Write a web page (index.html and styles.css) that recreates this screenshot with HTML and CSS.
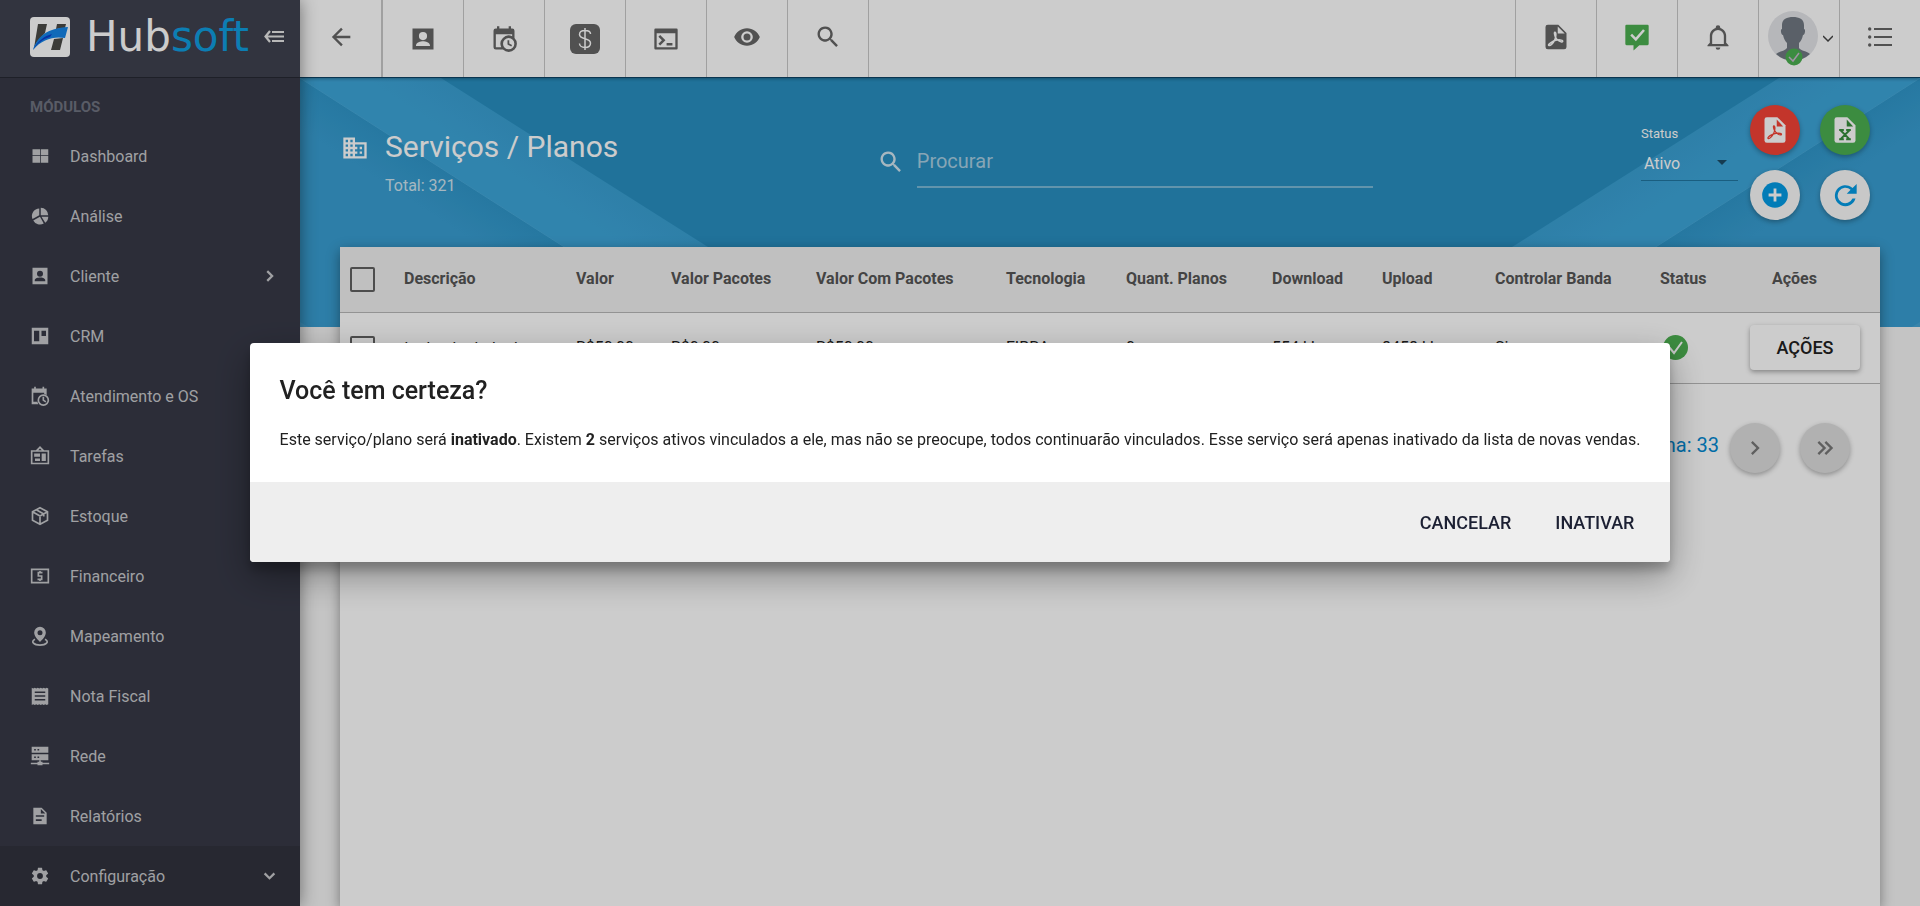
FILE: index.html
```html
<!DOCTYPE html>
<html lang="pt-BR">
<head>
<meta charset="utf-8">
<title>Hubsoft - Serviços / Planos</title>
<link rel="stylesheet" href="styles.css">
</head>
<body>
<div class="app">
  <aside class="sidebar">
    <div class="brand">
      <svg class="brand-mark" viewBox="0 0 40 40" aria-hidden="true">
        <rect width="40" height="40" rx="4" fill="#fff"/>
        <path d="M8 7h9l-2 9-8 9-3 6zM27 7h9l-1 4-9 1zM24 22l9-1-3 12h-9z" fill="#4a4a46"/>
        <path d="M3 33C7 20 17 11 38 10L35 21C24 19 12 22 3 33z" fill="#1585e8"/>
        <path d="M3 33C8 24 14 19 22 17L20 20C12 22 7 27 3 33z" fill="#0a3fd0"/>
      </svg>
      <span class="brand-name">Hub<span class="brand-accent">soft</span></span>
      <button class="icon-btn fold" type="button" aria-label="Recolher menu">
        <svg class="i20" viewBox="0 0 20 14"><path d="M6 1 1.500 6.500 6 12M2 6.500H20M8 2H20M8 11H20" fill="none" stroke="currentColor" stroke-width="2.200"/></svg>
      </button>
    </div>
    <h2 class="menu-title">MÓDULOS</h2>
    <nav class="menu">
      <a class="item" href="#"><svg class="i18" viewBox="0 0 24 24"><path d="M2 3h10v8H2zM13 3h10v8H13zM2 12h10v9H2zM13 12h10v9H13z"/></svg><span>Dashboard</span></a>
      <a class="item" href="#"><svg class="i18" viewBox="0 0 24 24"><path d="M13 1v10h10A10 10 0 0 0 13 1zM11 2A10 10 0 0 0 2 16l9-5zM12 13 3 18a10 10 0 0 0 14 4zM14 13l5 8a10 10 0 0 0 4-8z"/></svg><span>Análise</span></a>
      <a class="item" href="#"><svg class="i18" viewBox="0 0 24 24"><path fill-rule="evenodd" d="M2 1h20v22H2zM12 5a4 4 0 1 1 0 8 4 4 0 0 1 0-8zM5 19v-1.500C5 15 9.500 14 12 14s7 1 7 3.500V19z"/></svg><span>Cliente</span><svg class="i18 chev" viewBox="0 0 24 24"><path d="M7 5.500l6.500 6.500L7 18.500" class="line"/></svg></a>
      <a class="item" href="#"><svg class="i18" viewBox="0 0 24 24"><path fill-rule="evenodd" d="M1 1h22v22H1zM4 5v14h7V5zM14 5v7h6V5z"/></svg><span>CRM</span></a>
      <a class="item" href="#"><svg class="i20" viewBox="0 0 24 24"><path fill-rule="evenodd" d="M5 1h2v2h8V1h2v2h3v8a7 7 0 0 0-3-1V8H4v11h5a7 7 0 0 0 1 3H2V3h3z"/><circle cx="16" cy="17" r="6" fill="none" stroke="currentColor" stroke-width="2"/><path d="M16 13v4l3 2" class="line"/></svg><span>Atendimento e OS</span></a>
      <a class="item" href="#"><svg class="i20" viewBox="0 0 24 24"><path fill-rule="evenodd" d="M12 0l5 5h6v17H1V5h6zM12 3l-2 2h4zM3 7v13h18V7zM5 9h7v4H5zM14 9h5v9h-5zM6 15h6v3H6z"/></svg><span>Tarefas</span></a>
      <a class="item" href="#"><svg class="i20" viewBox="0 0 24 24"><path d="M12 2l9 5v10l-9 5-9-5V7zM3 7l9 5 9-5M12 12v10M7.500 4.500l9 5v3" class="line"/></svg><span>Estoque</span></a>
      <a class="item" href="#"><svg class="i20" viewBox="0 0 24 24"><path d="M2 4h20v16H2zM15 8h-5v4h4v4H9M12 6v2M12 16v2" class="line"/></svg><span>Financeiro</span></a>
      <a class="item" href="#"><svg class="i20" viewBox="0 0 24 24"><path fill-rule="evenodd" d="M12 1a7 7 0 0 1 7 7c0 5-7 11-7 11S5 13 5 8a7 7 0 0 1 7-7zM12 5a3 3 0 1 0 0 6 3 3 0 0 0 0-6z"/><path d="M6 16c-6 3-1 7 6 7s12-4 6-7" class="line"/></svg><span>Mapeamento</span></a>
      <a class="item" href="#"><svg class="i18" viewBox="0 0 24 24"><path fill-rule="evenodd" d="M1 1l2 1 2-1 2 1 2-1 2 1 2-1 2 1 2-1 2 1 2-1 2 1v21l-2 1-2-1-2 1-2-1-2 1-2-1-2 1-2-1-2 1-2-1-2 1zM5 6v2h14V6zM5 11v2h14v-2zM5 16v2h14v-2z"/></svg><span>Nota Fiscal</span></a>
      <a class="item" href="#"><svg class="i20" viewBox="0 0 24 24"><path fill-rule="evenodd" d="M2 1h20v7H2zM5 3.500v2h2v-2zM9 3.500v2h2v-2zM2 10h20v7H2zM5 12.500v2h2v-2zM9 12.500v2h2v-2z"/><path d="M11 17h2v2h2v1h8v2h-8v1H9v-1H1v-2h8v-1h2z"/></svg><span>Rede</span></a>
      <a class="item" href="#"><svg class="i20" viewBox="0 0 24 24"><path fill-rule="evenodd" d="M4 2h10l6 6v14H4zM13 3.500V9h5.500zM7 11v2h10v-2zM7 16v2h7v-2z"/></svg><span>Relatórios</span></a>
      <a class="item active" href="#"><svg class="i20" viewBox="0 0 24 24"><path d="M12 15.500A3.500 3.500 0 1 1 12 8.500a3.500 3.500 0 0 1 0 7m7.430-2.530c.04-.32.07-.64.07-.97s-.03-.66-.07-1l2.110-1.630c.19-.15.24-.42.12-.64l-2-3.460c-.12-.22-.39-.31-.61-.22l-2.490 1c-.52-.39-1.060-.73-1.690-.98l-.37-2.650A.506.506 0 0 0 14 2h-4c-.25 0-.46.18-.5.420l-.37 2.650c-.63.25-1.170.59-1.690.98l-2.490-1c-.22-.09-.49 0-.61.22l-2 3.460c-.13.22-.07.49.12.64L4.570 11c-.04.34-.07.67-.07 1s.03.65.07.97l-2.110 1.660c-.19.15-.25.42-.12.64l2 3.460c.12.22.39.3.61.22l2.490-1.010c.52.4 1.060.74 1.690.99l.37 2.650c.04.24.25.42.5.42h4c.25 0 .46-.18.5-.42l.37-2.650c.63-.26 1.170-.59 1.690-.99l2.490 1.010c.22.08.49 0 .61-.22l2-3.460c.12-.22.07-.49-.12-.64z"/></svg><span>Configuração</span><svg class="i18 chev" viewBox="0 0 24 24"><path d="M3.500 8.500L10 15l6.500-6.500" class="line"/></svg></a>
    </nav>
  </aside>

  <div class="page">
    <header class="toolbar">
      <button class="tool back" type="button" aria-label="Voltar"><svg class="i28" viewBox="0 0 24 24"><path d="M20 11v2H8l5.500 5.500-1.420 1.420L4.160 12l7.920-7.920L13.500 5.500 8 11z"/></svg></button>
      <button class="tool low" type="button" aria-label="Cliente"><svg class="i28" viewBox="0 0 24 24"><path fill-rule="evenodd" d="M3 3h18v18H3zM12 6a3.500 3.500 0 1 0 0 7 3.500 3.500 0 0 0 0-7zM6 17.500V18h12v-.5c0-2.300-4-3.500-6-3.500s-6 1.200-6 3.500z"/></svg></button>
      <button class="tool low" type="button" aria-label="Agenda"><svg class="i28" viewBox="0 0 24 24"><path d="M15 13h1.500v2.820l2.440 1.410-.75 1.300L15 16.690zM19 8H5v11h4.670A7 7 0 0 1 19 9.670zM5 21a2 2 0 0 1-2-2V5a2 2 0 0 1 2-2h1V1h2v2h8V1h2v2h1a2 2 0 0 1 2 2v6.100A7 7 0 1 1 11.100 21zM16 11.150a4.850 4.850 0 1 0 0 9.700 4.850 4.850 0 0 0 0-9.700z"/></svg></button>
      <button class="tool low" type="button" aria-label="Financeiro"><svg class="i32" viewBox="0 0 32 32"><rect x="1" y="1" width="30" height="30" rx="6"/><path d="M16 5v22M21.500 11c0-2-2-3.500-5.500-3.500s-5.500 1.500-5.500 4c0 5.500 11 3 11 8.500 0 3-2 4.500-5.500 4.500s-5.500-2-5.500-4" fill="none" stroke="#fff" stroke-width="1.500"/></svg></button>
      <button class="tool low" type="button" aria-label="Terminal"><svg class="i28" viewBox="0 0 24 24"><path fill-rule="evenodd" d="M3 3h18a1 1 0 0 1 1 1v16a1 1 0 0 1-1 1H3a1 1 0 0 1-1-1V4a1 1 0 0 1 1-1zM4 7v12h16V7zM5.500 10 7 8.500l4.500 4.500L7 17.500 5.500 16l3-3zM12.500 15.500h5v2h-5z"/></svg></button>
      <button class="tool" type="button" aria-label="Visualizar"><svg class="i28" viewBox="0 0 24 24"><path fill-rule="evenodd" d="M12 4.500C7 4.500 2.700 7.600 1 12c1.700 4.400 6 7.500 11 7.500s9.300-3.100 11-7.500C21.300 7.600 17 4.500 12 4.500zM12 17a5 5 0 1 1 0-10 5 5 0 0 1 0 10zM12 9a3 3 0 1 0 0 6 3 3 0 0 0 0-6z"/></svg></button>
      <button class="tool" type="button" aria-label="Pesquisar"><svg class="i28" viewBox="0 0 24 24"><path d="M9.500 3a6.500 6.500 0 0 1 4.940 10.730l.27.27h.79l5 5-1.500 1.500-5-5v-.79l-.27-.27A6.500 6.500 0 1 1 9.500 3m0 2a4.500 4.500 0 1 0 0 9 4.500 4.500 0 0 0 0-9"/></svg></button>
      <span class="spacer"></span>
      <button class="tool right" type="button" aria-label="PDF"><svg class="i28" viewBox="0 0 24 24"><path d="M5 1.500h9l7 7v12a2 2 0 0 1-2 2H5a2 2 0 0 1-2-2v-17a2 2 0 0 1 2-2z"/><path d="M13.500 3v6h6z" fill="#fff"/><path d="M11 8c1.400 0 1 4 0 6.500-1.200 2.500-4 5.500-5.200 4.700s3.800-4.200 7-4.600c3-.4 5.200.2 4.900 1.200-.5 1.400-4.900-.8-6.100-3.500-.8-2-1.300-4.300-.6-4.300z" fill="none" stroke="#fff" stroke-width="1.300"/></svg></button>
      <button class="tool right green" type="button" aria-label="Mensagens"><svg class="i28" viewBox="0 0 24 24"><path d="M3 1.500h18a1 1 0 0 1 1 1V18a1 1 0 0 1-1 1h-7l-5 4.500V19H3a1 1 0 0 1-1-1V2.500a1 1 0 0 1 1-1z"/><path d="M7 10l4 4 7-8" fill="none" stroke="#fff" stroke-width="2.200"/></svg></button>
      <button class="tool right" type="button" aria-label="Notificações"><svg class="i28" viewBox="0 0 24 24"><path d="M10 21h4a2 2 0 0 1-4 0m11-2v1H3v-1l2-2v-6c0-3.100 2.030-5.830 5-6.710V4a2 2 0 0 1 4 0v.29c2.970.88 5 3.610 5 6.710v6zm-4-8a5 5 0 0 0-10 0v7h10z"/></svg></button>
      <button class="tool right user" type="button" aria-label="Usuário">
        <svg class="avatar" viewBox="0 0 50 55"><circle cx="25" cy="25" r="25" fill="#e4e5e9"/><path d="M14 14C14 8 19 6 25 6s11 2 11 8v4c2 0 1 6-1 6-1 4-2 6-4 8v5c2 3 8 3 11 6a25 25 0 0 1-34 0c4-3 9-3 11-6v-5c-2-2-3-4-4-8-2 0-3-6-1-6z" fill="#717982"/><circle cx="26" cy="46" r="8.500" fill="#4caf50"/><path d="M21 46l4 4 6-8" fill="none" stroke="#c9b9cf" stroke-width="1.500"/></svg>
        <svg class="i10" viewBox="0 0 10 10"><path d="M0 2l5 5 5-5" fill="none" stroke="currentColor" stroke-width="1.500"/></svg>
      </button>
      <button class="tool right list" type="button" aria-label="Lista"><svg class="i24" viewBox="0 0 24 24"><path d="M6 3h18v2H6zM6 11h18v2H6zM6 19h18v2H6z"/><circle cx="1.700" cy="4" r="1.700"/><circle cx="1.700" cy="12" r="1.700"/><circle cx="1.700" cy="20" r="1.700"/></svg></button>
    </header>

    <main class="content">
      <svg class="ribbon" viewBox="0 0 540 250" aria-hidden="true">
        <defs>
          <linearGradient id="corner" gradientUnits="userSpaceOnUse" x1="141" y1="90" x2="117" y2="127"><stop offset="0" stop-color="#3097ca"/><stop offset="1" stop-color="#399ed2"/></linearGradient>
          <linearGradient id="band" gradientUnits="userSpaceOnUse" x1="270" y1="81" x2="246" y2="118"><stop offset="0" stop-color="#3aa0d3"/><stop offset="1" stop-color="#3da5d9"/></linearGradient>
        </defs>
        <path d="M0 0 391 250H0z" fill="url(#corner)"/>
        <path d="M0 0H141L536 250H391z" fill="url(#band)"/>
        <path d="M0 0 391 250" stroke="#46a9da" fill="none"/>
        <path d="M0 244 10 250H0z" fill="#46a5d6"/>
      </svg>
      <svg class="ribbon mirrored" viewBox="0 0 540 250" aria-hidden="true">
        <path d="M0 0 391 250H0z" fill="url(#corner)"/>
        <path d="M0 0H141L536 250H391z" fill="url(#band)"/>
        <path d="M0 0 391 250" stroke="#46a9da" fill="none"/>
        <path d="M0 244 10 250H0z" fill="#46a5d6"/>
      </svg>
      <section class="heading">
        <div class="title-block">
          <svg class="i28" viewBox="0 0 24 24"><path d="M18 15h-2v2h2m0-6h-2v2h2m2 6h-8v-2h2v-2h-2v-2h2v-2h-2V9h8M10 7H8V5h2m0 6H8V9h2m0 6H8v-2h2m0 6H8v-2h2M6 7H4V5h2m0 6H4V9h2m0 6H4v-2h2m0 6H4v-2h2m6-10V3H2v18h20V7z"/></svg>
          <div>
            <h1 class="title">Serviços / Planos</h1>
            <p class="total">Total: 321</p>
          </div>
        </div>
        <label class="search">
          <svg class="i28" viewBox="0 0 24 24"><path d="M9.500 3a6.500 6.500 0 0 1 4.940 10.730l.27.27h.79l5 5-1.500 1.500-5-5v-.79l-.27-.27A6.500 6.500 0 1 1 9.500 3m0 2a4.500 4.500 0 1 0 0 9 4.500 4.500 0 0 0 0-9"/></svg>
          <input class="search-input" type="text" placeholder="Procurar" aria-label="Procurar">
        </label>
        <div class="filters">
          <div class="status">
            <label class="status-label" for="status">Status</label>
            <div class="select-wrap">
              <select class="select" id="status"><option>Ativo</option><option>Inativo</option></select>
            </div>
          </div>
          <div class="actions">
            <button class="fab red" type="button" aria-label="Exportar PDF"><svg class="i28" viewBox="0 0 24 24"><path d="M5 1h9l7 7v13a2 2 0 0 1-2 2H5a2 2 0 0 1-2-2V3a2 2 0 0 1 2-2z"/><path d="M13.500 3v6H19z" fill="#f44336"/><path d="M11 8.500c1.400 0 1 4 0 6-1.200 2.500-3.700 5.500-4.900 4.700s3.500-4 6.700-4.400c3-.4 5 .2 4.700 1-.5 1.400-4.700-.8-5.900-3.300-.8-2-1.300-4-.6-4z" fill="none" stroke="#f44336" stroke-width="1.100"/></svg></button>
            <button class="fab green-bg" type="button" aria-label="Exportar Excel"><svg class="i28" viewBox="0 0 24 24"><path d="M5 1h9l7 7v13a2 2 0 0 1-2 2H5a2 2 0 0 1-2-2V3a2 2 0 0 1 2-2z"/><path d="M13.500 3v6H19z" fill="#388e3c"/><path d="M8 12l8 8M16 12l-8 8M7 12h4M13 12h4M7 20h4M13 20h4" fill="none" stroke="#388e3c" stroke-width="1.700"/></svg></button>
            <button class="fab" type="button" aria-label="Adicionar"><svg class="i28" viewBox="0 0 24 24"><circle cx="12" cy="12" r="11"/><path d="M12 6.500v11M6.500 12h11" stroke="#fff" stroke-width="2.400"/></svg></button>
            <button class="fab" type="button" aria-label="Atualizar"><svg class="i28" viewBox="0 0 24 24"><path d="M18.500 6A9 9 0 1 0 21 15h-2.600A6.600 6.600 0 1 1 16.800 7.600L13.500 11H22V2.500z"/></svg></button>
          </div>
        </div>
      </section>

      <section class="card">
        <table class="grid">
          <colgroup><col class="c1"><col class="c2"><col class="c3"><col class="c4"><col class="c5"><col class="c6"><col class="c7"><col class="c8"><col class="c9"><col class="c10"><col class="c11"><col class="c12"></colgroup>
          <thead>
            <tr><th><input class="check" type="checkbox" aria-label="Selecionar todos"></th><th>Descrição</th><th>Valor</th><th>Valor Pacotes</th><th>Valor Com Pacotes</th><th>Tecnologia</th><th>Quant. Planos</th><th>Download</th><th>Upload</th><th>Controlar Banda</th><th>Status</th><th class="th-actions">Ações</th></tr>
          </thead>
          <tbody>
            <tr><td><input class="check" type="checkbox" aria-label="Selecionar plano"></td><td>testes teste teste</td><td>R$50,00</td><td>R$0,00</td><td>R$50,00</td><td>FIBRA</td><td>0</td><td>554 kbps</td><td>8458 kbps</td><td>Sim</td><td><svg class="ok" viewBox="0 0 25 25" role="img" aria-label="Ativo"><circle cx="12.500" cy="12.500" r="12.500" fill="#4caf50"/><path d="M6 12l5 6 8-11" fill="none" stroke="#fff" stroke-width="2"/></svg></td><td><button class="row-btn" type="button">AÇÕES</button></td></tr>
          </tbody>
        </table>
        <div class="pager">
          <span class="pager-text">Última Página: 33</span>
          <button class="fab grey" type="button" aria-label="Próxima página"><svg class="i28" viewBox="0 0 24 24"><path d="M8.600 16.600 13.200 12 8.600 7.400 10 6l6 6-6 6z"/></svg></button>
          <button class="fab grey" type="button" aria-label="Última página"><svg class="i28" viewBox="0 0 24 24"><path d="M5.600 7.400 7 6l6 6-6 6-1.400-1.400L10.200 12zM11.600 7.400 13 6l6 6-6 6-1.400-1.400 4.600-4.600z"/></svg></button>
        </div>
      </section>
    </main>
  </div>
</div>

<div class="backdrop">
  <div class="dialog" role="dialog" aria-labelledby="dialog-title">
    <div class="dialog-body">
      <h2 class="dialog-title" id="dialog-title">Você tem certeza?</h2>
      <p class="dialog-text">Este serviço/plano será <b>inativado</b>. Existem <b>2</b> serviços ativos vinculados a ele, mas não se preocupe, todos continuarão vinculados. Esse serviço será apenas inativado da lista de novas vendas.</p>
    </div>
    <div class="dialog-actions">
      <button class="flat" type="button">CANCELAR</button>
      <button class="flat" type="button">INATIVAR</button>
    </div>
  </div>
</div>
</body>
</html>
```

FILE: styles.css
```css
* { box-sizing: border-box; }
body { margin: 0; font-family: Roboto, "Noto Sans", sans-serif; font-size: 16px; color: #212121; overflow: hidden; }
h1, h2, p { margin: 0; font-weight: 400; }
button { border: 0; padding: 0; background: none; font-family: inherit; cursor: pointer; }
svg { display: block; flex: none; fill: currentColor; }
.line { fill: none; stroke: currentColor; stroke-width: 2; }
.i10 { width: 10px; height: 10px; }
.i18 { width: 18px; height: 18px; }
.i20 { width: 20px; height: 20px; }
.i24 { width: 24px; height: 24px; }
.i28 { width: 28px; height: 28px; }
.i32 { width: 32px; height: 32px; }

.app { display: flex; height: 100vh; }

.sidebar { position: relative; z-index: 2; flex: 0 0 300px; display: flex; flex-direction: column; background: #373947; color: #c8c9cc; box-shadow: 0 0 16px rgba(0, 0, 0, .45); overflow: hidden; }
.brand { flex: none; display: flex; align-items: center; height: 78px; padding: 0 16px 4px 30px; background: #3f424f; border-bottom: 1px solid #262833; }
.brand-mark { width: 40px; height: 40px; margin-right: 16px; }
.brand-name { width: 178px; font-family: "DejaVu Sans", sans-serif; font-size: 42px; line-height: 48px; color: #fff; }
.brand-accent { color: #0f9ee0; }
.fold { color: #e6e6e6; }
.menu-title { flex: none; height: 48px; padding: 0 30px; font-size: 15px; font-weight: 700; line-height: 58px; color: #707380; }
.menu { display: flex; flex-direction: column; }
.item { flex: none; display: flex; align-items: center; height: 60px; padding: 0 20px 0 30px; color: inherit; text-decoration: none; }
.item > svg:first-child { width: 20px; }
.item > span { flex: 1; margin-left: 20px; }
.chev .line { stroke-width: 3; }
.item.active { background: #31333e; }

.page { flex: 1; min-width: 0; display: flex; flex-direction: column; background: #f5f5f5; }
.toolbar { position: relative; z-index: 1; flex: none; display: flex; height: 78px; background: #fff; border-bottom: 1px solid #0d4364; box-shadow: 0 1px 3px rgba(0, 0, 0, .3); color: #666; }
.tool { width: 81px; display: flex; align-items: center; justify-content: center; padding-bottom: 3px; border-right: 1px solid #c9c9c9; color: inherit; }
.low { padding-bottom: 0; }
.back { width: 83px; border-right: 2px solid #c9c9c9; }
.right { border-right: 0; border-left: 1px solid #c9c9c9; }
.spacer { flex: 1; }
.green { color: #4caf50; }
.user { gap: 5px; padding-left: 3px; padding-bottom: 0; color: #444; }
.avatar { width: 50px; height: 55px; }

.content { position: relative; flex: 1; display: flex; flex-direction: column; padding: 0 40px; background: linear-gradient(#288fc1, #288fc1) top / 100% 249px no-repeat; }
.ribbon { position: absolute; top: 0; left: 0; width: 540px; height: 250px; clip-path: inset(0 0 1px 0); }
.mirrored { left: auto; right: 0; transform: scaleX(-1); }
.heading { position: relative; flex: none; display: grid; grid-template-columns: 16fr 500px 15fr; height: 169px; color: #fff; }
.title-block { display: flex; gap: 16px; padding: 50px 0 0 1px; }
.title-block > svg { margin-top: 6px; }
.title { font-size: 30px; line-height: 38px; }
.total { margin-top: 8px; line-height: 24px; color: #d0e5f0; }
.search { display: flex; align-items: flex-start; gap: 12px; padding: 70px 4px 0 0; color: #d0e5f0; }
.search-input { flex: 1; height: 40px; padding: 0 0 12px; border: 0; border-bottom: 2px solid #7bb9d8; outline: 0; background: none; font: 20px/24px Roboto, sans-serif; color: #fff; }
.search-input::placeholder { color: #a9cfe3; opacity: 1; }
.filters { display: flex; justify-content: flex-end; gap: 12px; padding: 27px 10px 0 0; }
.status { width: 97px; padding-top: 17px; }
.status-label { display: block; font-size: 13px; line-height: 24px; }
.select-wrap { position: relative; border-bottom: 1px solid #2176a0; }
.select-wrap::after { content: ""; position: absolute; right: 11px; top: 14px; border: 5px solid transparent; border-top-color: #1c4c66; border-bottom: 0; }
.select { display: block; width: 100%; height: 34px; padding: 0 3px; border: 0; appearance: none; background: none; font: 16px Roboto, sans-serif; color: #fff; }
.actions { display: grid; grid-template-columns: 50px 50px; grid-auto-rows: 50px; gap: 15px 20px; }
.fab { width: 50px; height: 50px; display: flex; align-items: center; justify-content: center; border-radius: 50%; background: #fafafa; color: #039be5; box-shadow: 0 2px 5px rgba(0, 0, 0, .3); }
.red { background: #f44336; color: #fff; }
.green-bg { background: #4caf50; color: #fff; }
.grey { background: #dedede; color: #777; }

.card { position: relative; flex: 1; background: #fff; box-shadow: 0 4px 12px rgba(0, 0, 0, .4); }
.grid { width: 100%; table-layout: fixed; border-collapse: collapse; text-align: left; }
.grid th, .grid td { padding: 0; white-space: nowrap; border-bottom: 1px solid #b8b8b8; }
.grid th { height: 65px; padding-bottom: 1px; background: #f0f0f0; font-weight: 700; color: #555; }
.grid td { height: 71px; }
.grid .th-actions { padding-left: 22px; }
.c1 { width: 64px; }
.c2 { width: 172px; }
.c3 { width: 95px; }
.c4 { width: 145px; }
.c5 { width: 190px; }
.c6 { width: 120px; }
.c7 { width: 146px; }
.c8 { width: 110px; }
.c9 { width: 113px; }
.c10 { width: 165px; }
.c11 { width: 90px; }
.check { display: block; appearance: none; width: 25px; height: 25px; margin: 2px 0 0 10px; border: 2px solid #616161; border-radius: 2px; }
.ok { width: 25px; height: 25px; margin-left: 3px; }
.row-btn { display: block; width: 110px; height: 45px; border-radius: 4px; background: #fff; font-size: 18px; font-weight: 500; color: #212121; box-shadow: 0 2px 5px rgba(0, 0, 0, .35); }
.pager { display: flex; align-items: center; justify-content: flex-end; gap: 20px; padding: 39px 30px 0 0; }
.pager-text { margin-right: -9px; padding-bottom: 6px; font-size: 20px; line-height: 24px; color: #0288d1; }

.backdrop { position: fixed; inset: 0; z-index: 10; display: flex; align-items: center; justify-content: center; padding-bottom: 1px; background: rgba(0, 0, 0, .2); }
.dialog { overflow: hidden; border-radius: 4px; background: #fff; box-shadow: 0 8px 10px rgba(0, 0, 0, .2), 0 14px 36px rgba(0, 0, 0, .35); }
.dialog-body { padding: 32px 30px 30px; }
.dialog-title { font-size: 25px; font-weight: 500; line-height: 32px; }
.dialog-text { margin-top: 21px; line-height: 24px; }
.dialog-actions { display: flex; align-items: center; justify-content: flex-end; gap: 12px; height: 80px; padding: 0 20px; background: #eee; }
.flat { height: 44px; padding: 0 16px; font-size: 18px; font-weight: 500; color: #1c2033; }
```
